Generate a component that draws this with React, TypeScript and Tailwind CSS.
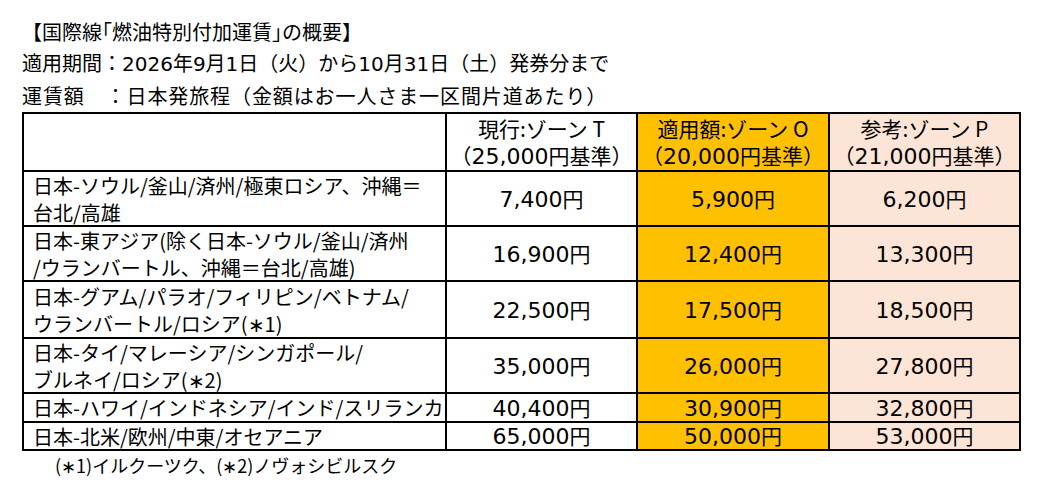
import React from "react";

const rows: { label: string[]; t: string; o: string; p: string }[] = [
  { label: ["日本-ソウル/釜山/済州/極東ロシア、沖縄＝", "台北/高雄"], t: "7,400", o: "5,900", p: "6,200" },
  { label: ["日本-東アジア(除く日本-ソウル/釜山/済州", "/ウランバートル、沖縄＝台北/高雄)"], t: "16,900", o: "12,400", p: "13,300" },
  { label: ["日本-グアム/パラオ/フィリピン/ベトナム/", "ウランバートル/ロシア(∗1)"], t: "22,500", o: "17,500", p: "18,500" },
  { label: ["日本-タイ/マレーシア/シンガポール/", "ブルネイ/ロシア(∗2)"], t: "35,000", o: "26,000", p: "27,800" },
  { label: ["日本-ハワイ/インドネシア/インド/スリランカ"], t: "40,400", o: "30,900", p: "32,800" },
  { label: ["日本-北米/欧州/中東/オセアニア"], t: "65,000", o: "50,000", p: "53,000" },
];

function Yen({ v }: { v: string }) {
  return (
    <span className="whitespace-nowrap">
      <span className="font-['DejaVu_Sans',sans-serif] text-[22px]">{v}</span>
      <span className="text-[21px]">円</span>
    </span>
  );
}

function Head({ a, b }: { a: string; b: string }) {
  return (
    <div className="text-[21px] flex flex-col items-center">
      <div>{a}</div>
      <div>
        （<span className="font-['DejaVu_Sans',sans-serif] text-[22px]">{b}</span>円基準）
      </div>
    </div>
  );
}

export default function App() {
  return (
    <div className="w-[1039px] h-[492px] bg-white text-black font-['Noto_Sans_CJK_JP',sans-serif] pl-[22px] pt-[16px] overflow-hidden">
      <div className="text-[20px] leading-[32px] whitespace-nowrap">
        <div>【国際線｢燃油特別付加運賃｣の概要】</div>
        <div className="font-['DejaVu_Sans','Noto_Sans_CJK_JP',sans-serif]">適用期間：2026年9月1日（火）から10月31日（土）発券分まで</div>
        <div className="tracking-[0.9px]">運賃額　：日本発旅程（金額はお一人さま一区間片道あたり）</div>
      </div>
      <div className="grid w-[999px] bg-black p-[2px] gap-[2px] grid-cols-[421px_189px_190px_189px] grid-rows-[56px_53px_53px_55px_53px_27px_26px] text-[20px] leading-[27px] whitespace-nowrap">
        <div className="bg-white" />
        <div className="bg-white flex flex-col items-center justify-center">
          <Head a="現行:ゾーン T" b="25,000" />
        </div>
        <div className="bg-[#ffc000] flex flex-col items-center justify-center">
          <Head a="適用額:ゾーン O" b="20,000" />
        </div>
        <div className="bg-[#fce4d6] flex flex-col items-center justify-center">
          <Head a="参考:ゾーン P" b="21,000" />
        </div>
        {rows.map((r, i) => (
          <React.Fragment key={i}>
            <div className="bg-white flex flex-col justify-center px-[9px]">
              {r.label.map((l, j) => (
                <div key={j}>{l}</div>
              ))}
            </div>
            <div className="bg-white flex items-center justify-center">
              <Yen v={r.t} />
            </div>
            <div className="bg-[#ffc000] flex items-center justify-center">
              <Yen v={r.o} />
            </div>
            <div className="bg-[#fce4d6] flex items-center justify-center">
              <Yen v={r.p} />
            </div>
          </React.Fragment>
        ))}
      </div>
      <div className="pl-[33px] text-[18px] leading-[28px] whitespace-nowrap">(∗1)イルクーツク、(∗2)ノヴォシビルスク</div>
    </div>
  );
}
